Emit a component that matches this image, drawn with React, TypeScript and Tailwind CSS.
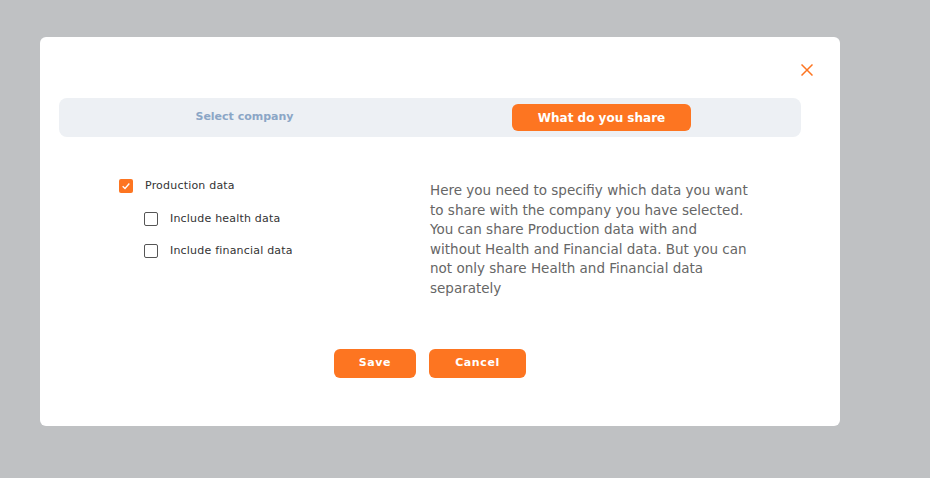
import { useState } from "react";

const font = { fontFamily: '"DejaVu Sans", "Noto Sans", sans-serif' };

function Check({ checked, onChange, label }: { checked: boolean; onChange: () => void; label: string }) {
  return (
    <label className="flex cursor-pointer items-center gap-3">
      <span
        onClick={onChange}
        className={
          checked
            ? "flex h-[14px] w-[14px] items-center justify-center rounded-[2px] bg-[#fd7521]"
            : "flex h-[14px] w-[14px] items-center justify-center rounded-[2px] border border-[#555] bg-white"
        }
      >
        {checked && (
          <svg viewBox="0 0 12 12" className="h-[10px] w-[10px]" fill="none" stroke="white" strokeWidth="1.6">
            <path d="M2 6.2 L4.8 9 L10 3" />
          </svg>
        )}
      </span>
      <span className="text-[11px] text-[#333] tracking-[0.2px]">{label}</span>
    </label>
  );
}

export default function App() {
  const [prod, setProd] = useState(true);
  const [health, setHealth] = useState(false);
  const [fin, setFin] = useState(false);

  return (
    <div className="h-[478px] w-[930px] bg-[#bfc1c3] pt-[37px] pl-[40px]" style={font}>
      <div className="flex h-[389px] w-[800px] flex-col rounded-[6px] bg-white">
        {/* Cerrar */}
        <div className="flex h-[61px] justify-end pt-[27px] pr-[27px]">
          <button className="h-[12px] text-[#fd7521]">
            <svg viewBox="0 0 12 12" className="h-[12px] w-[12px]" stroke="currentColor" strokeWidth="1.5">
              <path d="M0.5 0.5 L11.5 11.5 M11.5 0.5 L0.5 11.5" />
            </svg>
          </button>
        </div>

        {/* Pestañas */}
        <div className="mx-[19px] grid h-[39px] w-[742px] grid-cols-2 items-center rounded-[8px] bg-[#edf0f4]">
          <div className="text-center text-[11px] font-semibold text-[#8ba6c6]">Select company</div>
          <div className="flex justify-start pl-[82px]">
            <div className="flex h-[27px] w-[179px] items-center justify-center rounded-[6px] bg-[#fd7521] text-[12px] font-bold text-white">
              What do you share
            </div>
          </div>
        </div>

        {/* Contenido */}
        <div className="flex pt-[41px] pl-[19px]">
          <div className="w-[371px] pl-[60px]">
            <Check checked={prod} onChange={() => setProd(!prod)} label="Production data" />
            <div className="mt-[16px] flex flex-col gap-[16px] pl-[25px]">
              <Check checked={health} onChange={() => setHealth(!health)} label="Include health data" />
              <Check checked={fin} onChange={() => setFin(!fin)} label="Include financial data" />
            </div>
          </div>
          <p className="mt-[3px] w-[340px] text-[13.5px] leading-[19.6px] text-[#666]">
            Here you need to specifiy which data you want
            <br />
            to share with the company you have selected.
            <br />
            You can share Production data with and
            <br />
            without Health and Financial data. But you can
            <br />
            not only share Health and Financial data
            <br />
            separately
          </p>
        </div>

        {/* Botones */}
        <div className="mt-[50px] flex gap-[13px] pl-[294px]">
          <button className="h-[29px] w-[82px] rounded-[6px] bg-[#fd7521] text-[11px] font-semibold tracking-[0.6px] text-white">
            Save
          </button>
          <button className="h-[29px] w-[97px] rounded-[6px] bg-[#fd7521] text-[11px] font-semibold tracking-[0.6px] text-white">
            Cancel
          </button>
        </div>
      </div>
    </div>
  );
}
